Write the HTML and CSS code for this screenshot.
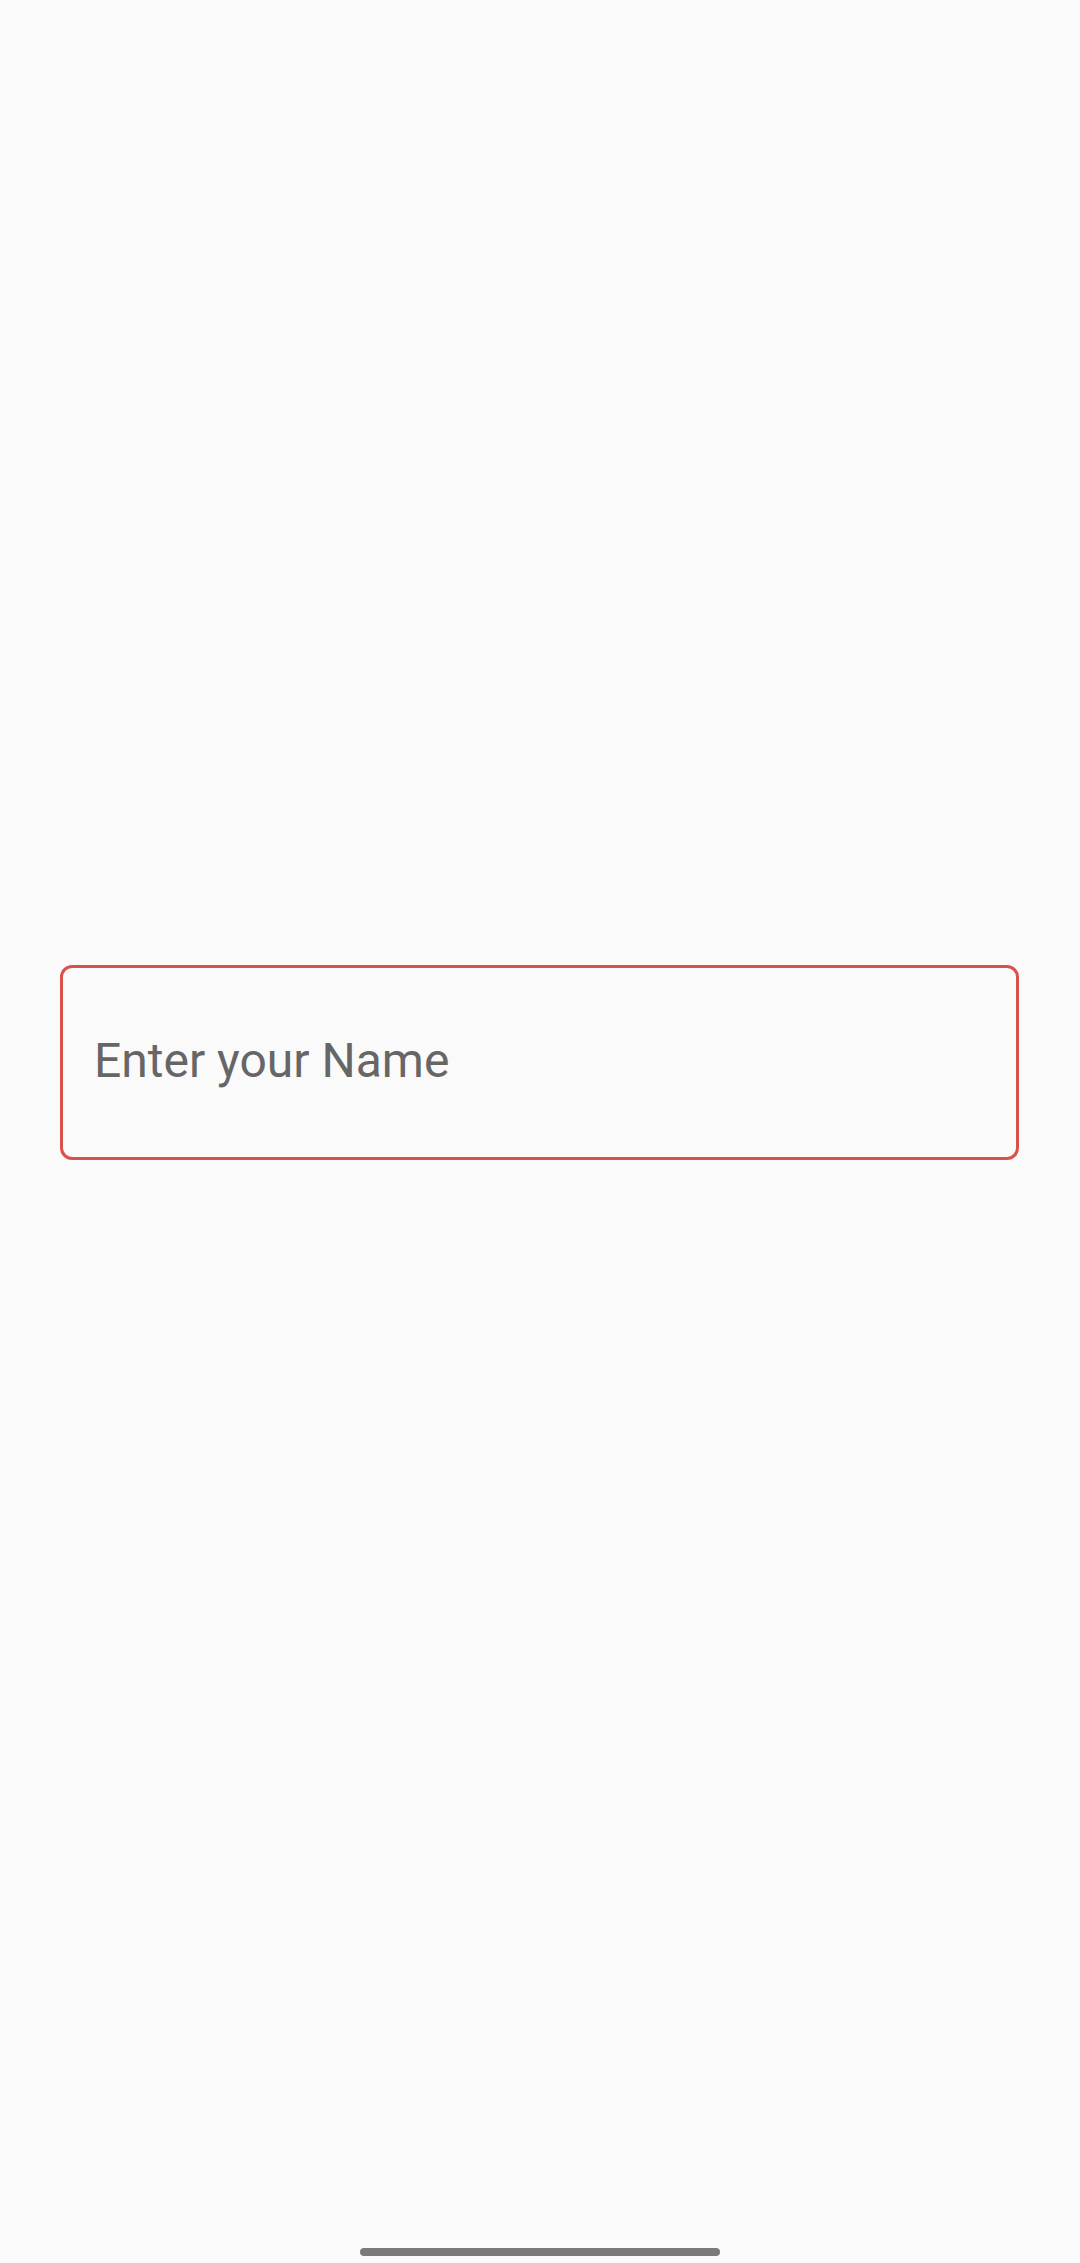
FILE: index.html
```html
<!DOCTYPE html>
<html>
<head>
<meta charset="utf-8">
<link rel="stylesheet" href="styles.css">
</head>
<body>
<div class="screen">
  <main class="content">
    <div class="field">
      <span class="placeholder">Enter your Name</span>
    </div>
  </main>
  <div class="nav">
    <div class="handle"></div>
  </div>
</div>
</body>
</html>
```
FILE: styles.css
```css
html, body {
  margin: 0;
  padding: 0;
  background: #fafafa;
}
.screen {
  width: 1080px;
  height: 2263px;
  display: flex;
  flex-direction: column;
  font-family: Roboto, "Noto Sans", sans-serif;
}
.content {
  flex: 1;
  padding: 965px 61px 0 60px;
}
.field {
  box-sizing: border-box;
  height: 195px;
  border: 3px solid #d8514a;
  border-radius: 12px;
  display: flex;
  align-items: center;
  padding-left: 31px;
}
.placeholder {
  font-size: 48px;
  color: #666666;
  line-height: 1;
  margin-top: -4px;
}
.nav {
  height: 15px;
  display: flex;
  justify-content: center;
}
.handle {
  width: 360px;
  height: 8px;
  border-radius: 4px;
  background: #7a7a7a;
}
```
